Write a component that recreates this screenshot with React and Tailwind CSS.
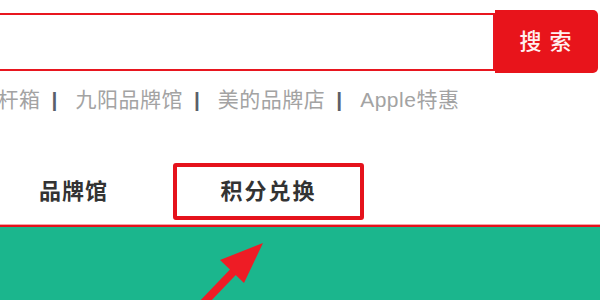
const links = ["拉杆箱", "九阳品牌馆", "美的品牌店", "Apple特惠"];

export default function App() {
  return (
    <div className="relative h-[300px] w-[600px] overflow-hidden bg-white font-['Liberation_Sans','Noto_Sans_CJK_SC',sans-serif]">
      {/* search bar */}
      <div className="flex items-center pt-[10px]">
        <div className="-ml-[20px] h-[58px] flex-1 rounded-l border-2 border-[#e8161f] bg-white" />
        <button className="mr-[2px] flex h-[63px] w-[103px] items-center justify-center rounded-r-[5px] bg-[#e8141b] pl-[6px] text-[22px] font-medium tracking-[8px] text-[#fff0f0]">
          搜索
        </button>
      </div>

      {/* hot links */}
      <div className="-ml-[24px] mt-[14px] flex items-center text-[21px] leading-[26px] text-[#a3a3a3]">
        {links.map((l, i) => (
          <div key={l} className="flex items-center">
            <span className="tracking-[0.5px]">{l}</span>
            {i < links.length - 1 && (
              <span className="ml-[11px] mr-[18px] font-bold text-[#5a5f6a]">|</span>
            )}
          </div>
        ))}
      </div>

      {/* tabs */}
      <div className="mt-[50px] flex items-center">
        <div className="ml-[39px] w-[134px] text-[22px] font-bold leading-[57px] tracking-[1px] text-[#333]">品牌馆</div>
        <div className="flex h-[57px] w-[191px] items-center justify-center rounded-[3px] border-4 border-[#e5121c] text-[22px] font-bold tracking-[2px] text-[#333]">
          积分兑换
        </div>
      </div>

      <div className="mt-[4px] h-[1px] bg-[#f7a3a6]" />
      <div className="h-[2px] bg-[#e5121c]" />

      {/* green banner */}
      <div className="relative h-[80px] bg-[#1bb68d]">
        <svg className="absolute left-0 top-0" width="600" height="80" viewBox="0 0 600 80">
          <line x1="190" y1="90" x2="236" y2="42" stroke="#ee1c25" strokeWidth="8" />
          <polygon points="263,16 220,33 244,56" fill="#ee1c25" />
        </svg>
      </div>
    </div>
  );
}
